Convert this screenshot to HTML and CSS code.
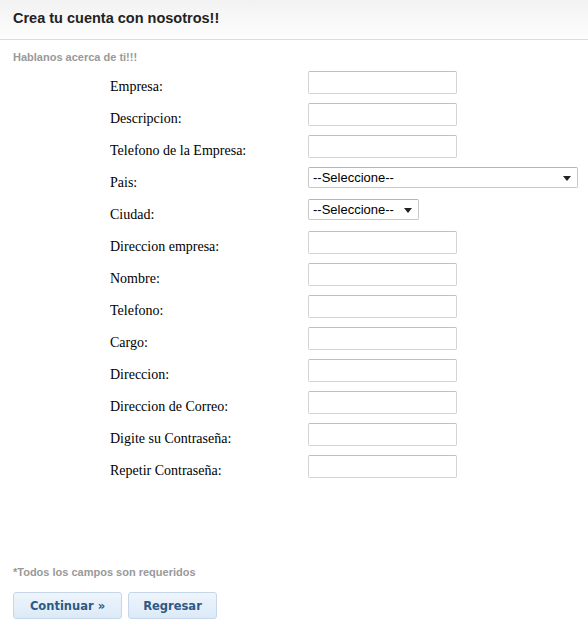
FILE: index.html
```html
<!DOCTYPE html>
<html lang="es">
<head>
<meta charset="utf-8">
<link rel="stylesheet" href="styles.css">
</head>
<body>
<div class="header"><h1 class="title">Crea tu cuenta con nosotros!!</h1></div>
<p class="subtitle">Hablanos acerca de ti!!!</p>
<form class="form">
  <label class="lbl">Empresa:</label><div class="fld"><input class="txt" type="text"></div>
  <label class="lbl">Descripcion:</label><div class="fld"><input class="txt" type="text"></div>
  <label class="lbl">Telefono de la Empresa:</label><div class="fld"><input class="txt" type="text"></div>
  <label class="lbl">Pais:</label><div class="fld"><div class="sel sel-wide"><span>--Seleccione--</span><i class="arrow"></i></div></div>
  <label class="lbl">Ciudad:</label><div class="fld"><div class="sel sel-small"><span>--Seleccione--</span><i class="arrow"></i></div></div>
  <label class="lbl">Direccion empresa:</label><div class="fld"><input class="txt" type="text"></div>
  <label class="lbl">Nombre:</label><div class="fld"><input class="txt" type="text"></div>
  <label class="lbl">Telefono:</label><div class="fld"><input class="txt" type="text"></div>
  <label class="lbl">Cargo:</label><div class="fld"><input class="txt" type="text"></div>
  <label class="lbl">Direccion:</label><div class="fld"><input class="txt" type="text"></div>
  <label class="lbl">Direccion de Correo:</label><div class="fld"><input class="txt" type="text"></div>
  <label class="lbl">Digite su Contraseña:</label><div class="fld"><input class="txt" type="password"></div>
  <label class="lbl">Repetir Contraseña:</label><div class="fld"><input class="txt" type="password"></div>
</form>
<p class="note">*Todos los campos son requeridos</p>
<div class="actions">
  <button class="btn btn-next" type="button">Continuar »</button>
  <button class="btn btn-back" type="button">Regresar</button>
</div>
</body>
</html>
```
FILE: styles.css
```css
html, body { margin: 0; padding: 0; background: #fff; }
body { font-family: "Liberation Sans", Arial, sans-serif; width: 588px; }
.header {
  height: 40px;
  box-sizing: border-box;
  border-bottom: 1px solid #dcdcdc;
  background: linear-gradient(#f2f2f2, #fdfdfd);
  padding: 9px 0 0 13px;
}
.title { margin: 0; font-size: 14.5px; font-weight: bold; color: #222; line-height: 18px; }
.subtitle { margin: 10px 0 0 13px; font-size: 11px; font-weight: bold; color: #999; line-height: 14px; }
.form {
  display: grid;
  grid-template-columns: 198px 280px;
  grid-auto-rows: 32px;
  margin: 7px 0 0 110px;
}
.lbl {
  font-family: "Liberation Serif", "Times New Roman", serif;
  font-size: 14px;
  color: #000;
  padding-top: 8px;
  line-height: 16px;
}
.txt {
  box-sizing: border-box;
  width: 149px; height: 23px;
  margin: 0;
  border: 1px solid #d4d4d4;
  border-top-color: #bfbfbf;
  border-radius: 2px;
  background: #fff;
  padding: 0 3px;
}
.sel {
  box-sizing: border-box;
  height: 21px;
  border: 1px solid #c8c8c8;
  border-top-color: #b5b5b5;
  border-radius: 2px;
  display: flex;
  align-items: center;
  justify-content: space-between;
  padding: 0 6px 0 4px;
  font-family: "Liberation Sans", Arial, sans-serif;
  font-size: 13px;
  color: #000;
  background: #fff;
}
.sel-wide { width: 270px; }
.sel-small { width: 111px; }
.arrow {
  width: 0; height: 0;
  border-left: 4px solid transparent;
  border-right: 4px solid transparent;
  border-top: 5px solid #222;
  margin-top: 1px;
}
.note { margin: 78px 0 0 13px; font-size: 11px; font-weight: bold; color: #999; line-height: 14px; }
.actions { display: flex; gap: 6px; margin: 13px 0 0 13px; }
.btn {
  box-sizing: border-box;
  height: 27px;
  border: 1px solid #c5d7e8;
  border-radius: 3px;
  background: linear-gradient(#eef5fc, #dceaf7);
  color: #2c5a86;
  font-family: "DejaVu Sans", Verdana, sans-serif;
  font-weight: bold;
  font-size: 11.5px;
  padding: 0;
  white-space: nowrap;
}
.btn-next { width: 109px; }
.btn-back { width: 89px; }
```
